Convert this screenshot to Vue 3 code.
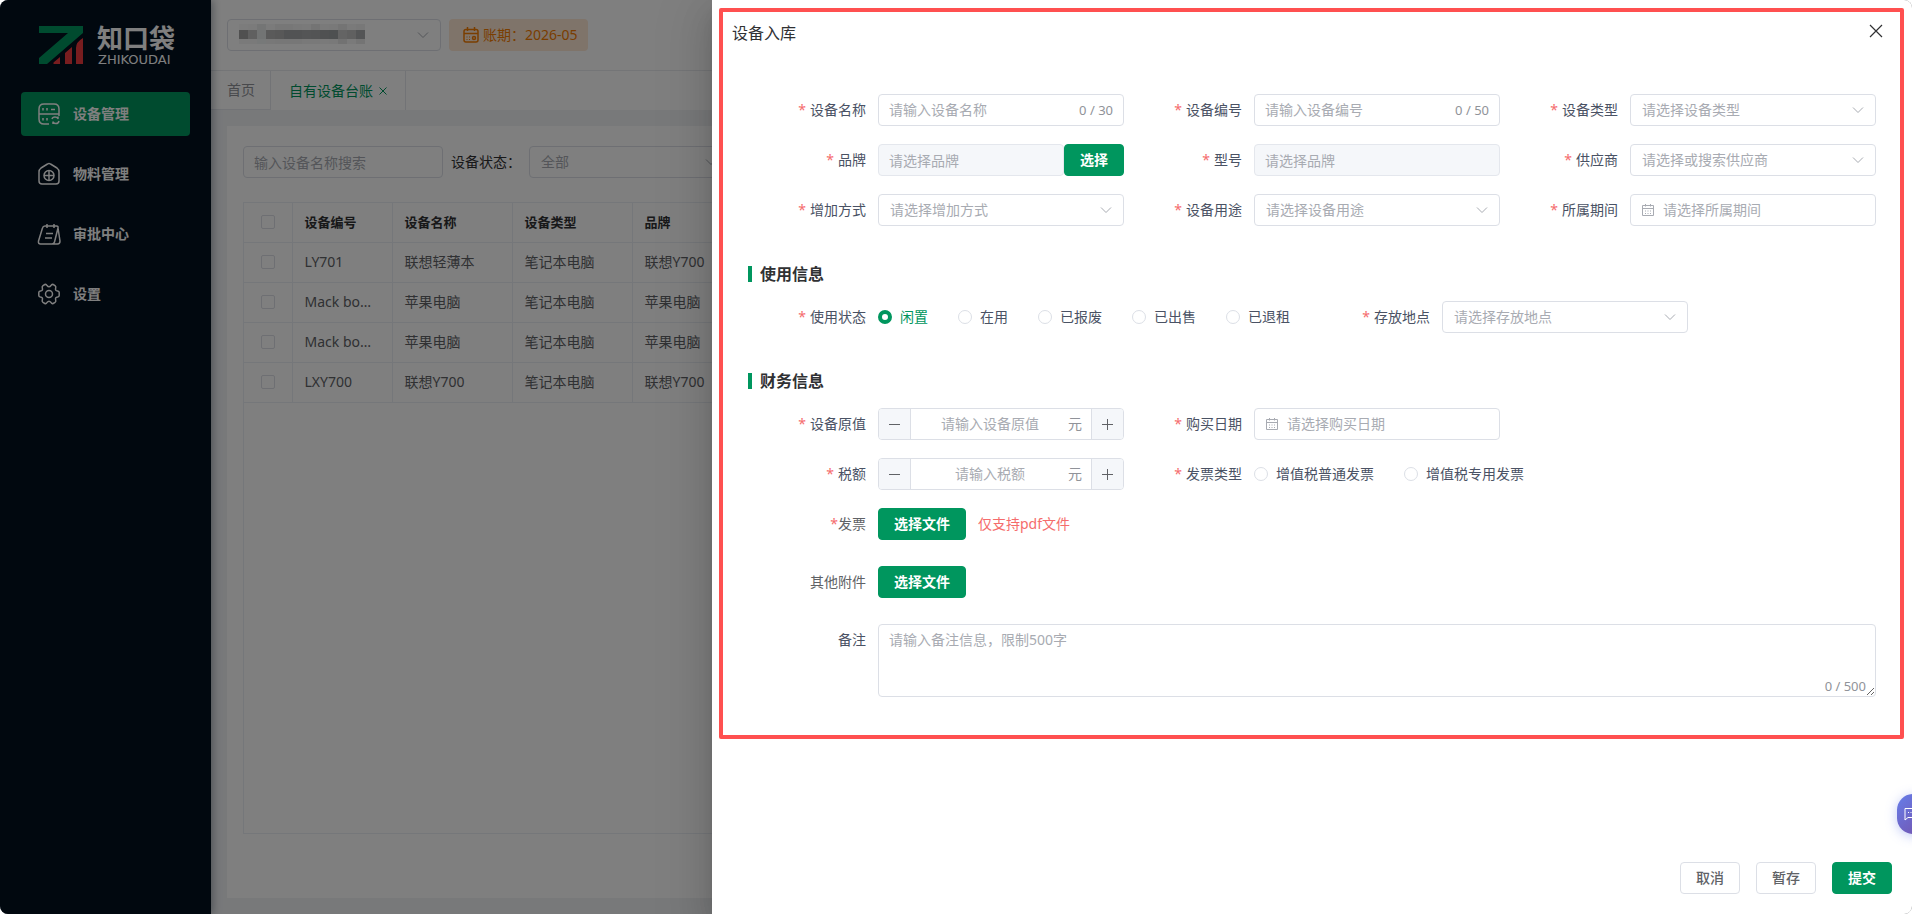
<script setup>
import { ref } from 'vue'

const menus = ['设备管理', '物料管理', '审批中心', '设置']
const activeMenu = ref(0)

// 台账列表
const rows = ref([
  { code: 'LY701', name: '联想轻薄本', type: '笔记本电脑', brand: '联想Y700' },
  { code: 'Mack book pro', name: '苹果电脑', type: '笔记本电脑', brand: '苹果电脑' },
  { code: 'Mack book air', name: '苹果电脑', type: '笔记本电脑', brand: '苹果电脑' },
  { code: 'LXY700', name: '联想Y700', type: '笔记本电脑', brand: '联想Y700' }
])

// 公司名称打码色块：上、中、下三行
const mosaic = [
  '#f8f8f8', '#f6f6f6', '#e8eaea', '#f6f6f6', '#eeeeee', '#eeeeee', '#f2f2f2', '#f4f4f4', '#e8e8e8', '#f4f4f4', '#f2f2f2', '#e8e8e8', '#f4f4f4', '#f0f0f0',
  '#a0a0a0', '#c0c0c0', '#e4e8e8', '#b4b4b4', '#b0b0b0', '#a4a6a8', '#a4a6a8', '#a8aaac', '#a6a8aa', '#a0a2a4', '#9ca0a2', '#c8c8c8', '#c0c0c0', '#a8aaac',
  '#f4f4f4', '#f4f4f4', '#eef2f2', '#f0f0f0', '#eeeeee', '#eeeeee', '#eeeeee', '#f2f2f2', '#f2f2f2', '#f4f4f4', '#f2f2f2', '#e4e4e4', '#f4f4f4', '#e8e8e8'
]

const statusList = ['闲置', '在用', '已报废', '已出售', '已退租']
const invoiceTypes = ['增值税普通发票', '增值税专用发票']

const form = ref({
  name: '', code: '', type: '', brand: '', model: '', supplier: '',
  addWay: '', usage: '', period: '', status: '闲置', place: '',
  price: '', buyDate: '', tax: '', invoiceType: '', remark: ''
})

const visible = ref(true)

const step = (key, n) => {
  form.value[key] = String(Math.max(0, Number(form.value[key] || 0) + n))
}
</script>

<template>
  <div class="app">
    <aside class="sidebar">
      <div class="logo">
        <svg width="44" height="38" viewBox="0 0 44 38">
          <path fill="#00965e" d="M0 0H44V7L8 38H0V32L29 7H0Z" />
          <path fill="#f03a3f" d="M21 31V38H14.500V36.500ZM33 21V38H26V27ZM44 12V38H37V22Q37 16 44 12Z" />
        </svg>
        <div class="logo-text">
          <span class="logo-cn">知口袋</span>
          <span class="logo-en">ZHIKOUDAI</span>
        </div>
      </div>
      <nav class="menu">
        <a v-for="(m, i) in menus" :key="m" href="#" class="menu-item" :class="{ active: activeMenu === i }" @click.prevent="activeMenu = i">
          <svg v-if="i === 0" class="menu-icon" viewBox="0 0 22 22">
            <path d="M1 11V6Q1 1 6 1H16Q21 1 21 6V11ZM1 11V16Q1 21 6 21H11M21 11V13" />
            <path d="M5 5V7.500M9 5V7.500M13 6.500H17M5 15V17.500M9 15V17.500M14 16Q14.500 14 17 14Q19 14 20 15.500V13.500M21 18Q20.500 20.500 18 20.500Q16 20.500 15 19V21" />
          </svg>
          <svg v-else-if="i === 1" class="menu-icon" viewBox="0 0 22 22">
            <path d="M9.500 1Q11 0 12.500 1L19 5Q21 6.500 21 9V18Q21 21 18 21H4Q1 21 1 18V9Q1 6.500 3 5Z" />
            <circle cx="11" cy="12.500" r="5" />
            <path d="M11 7.500V17.500M6 12.500H16" />
          </svg>
          <svg v-else-if="i === 2" class="menu-icon" viewBox="0 0 22 22">
            <path d="M18.500 3H7Q5 3 4.500 5L0.500 18Q0 21 2.500 21H14Q16 21 16.500 19L20 5Q20.500 3 18.500 3ZM20 5L22 18Q22 21 19.500 21H14M9 1V5M16 1V5M8 10.500H15M7 15H14" />
          </svg>
          <svg v-else class="menu-icon" viewBox="0 0 22 22">
            <path d="M6.800 1.500Q8.200 1 9 2.500Q11 5 13 2.500Q13.800 1 15.200 1.500L17 2.600Q18.200 3.500 17.700 5Q16.800 7.600 19.600 8Q21.200 8.300 21.200 9.600V12.400Q21.200 13.700 19.600 14Q16.800 14.400 17.700 17Q18.200 18.500 17 19.400L15.200 20.500Q13.800 21 13 19.500Q11 17 9 19.500Q8.200 21 6.800 20.500L5 19.400Q3.800 18.500 4.300 17Q5.200 14.400 2.400 14Q0.800 13.700 0.800 12.400V9.600Q0.800 8.300 2.400 8Q5.200 7.600 4.300 5Q3.800 3.500 5 2.600Z" />
            <circle cx="11" cy="11" r="3.500" />
          </svg>
          <span>{{ m }}</span>
        </a>
      </nav>
    </aside>

    <div class="main">
      <header class="topbar">
        <div class="select company">
          <select aria-label="公司"><option></option></select>
          <div class="mosaic"><i v-for="(c, i) in mosaic" :key="i" :style="{ background: c }"></i></div>
          <svg class="arrow" viewBox="0 0 14 14"><path d="M2 4.500L7 9.500L12 4.500" /></svg>
        </div>
        <div class="period">
          <svg width="16" height="16" viewBox="0 0 16 16">
            <path d="M3 2.500H13Q15 2.500 15 4.500V13Q15 15 13 15H3Q1 15 1 13V4.500Q1 2.500 3 2.500ZM1 6.500H15M4.500 0V4M11.500 0V4" stroke-width="1.5" />
            <path d="M3.500 10H4.500M6 10H7M3.500 12.500H4.500M6 12.500H7" />
            <circle cx="11" cy="11" r="1.500" stroke-width="1.5" />
          </svg>
          <span>账期：2026-05</span>
        </div>
      </header>
      <div class="tabs">
        <a href="#" class="tab">首页</a>
        <a href="#" class="tab current">自有设备台账
          <svg width="8" height="8" viewBox="0 0 8 8"><path d="M0.500 0.500L7.500 7.500M7.500 0.500L0.500 7.500" /></svg>
        </a>
      </div>
      <section class="content">
        <div class="filters">
          <input class="input search" type="text" placeholder="输入设备名称搜索" aria-label="设备名称">
          <label for="f-status">设备状态：</label>
          <div class="select filter-status">
            <select id="f-status"><option>全部</option></select>
            <svg class="arrow" viewBox="0 0 14 14"><path d="M2 4.500L7 9.500L12 4.500" /></svg>
          </div>
        </div>
        <div class="table-box">
          <table>
            <colgroup>
              <col class="c-check"><col class="c-code"><col class="c-mid"><col class="c-mid"><col class="c-mid"><col>
            </colgroup>
            <thead>
              <tr>
                <th class="check"><input type="checkbox" aria-label="全选"></th>
                <th>设备编号</th><th>设备名称</th><th>设备类型</th><th>品牌</th><th></th>
              </tr>
            </thead>
            <tbody>
              <tr v-for="r in rows" :key="r.code">
                <td class="check"><input type="checkbox" :aria-label="r.code"></td>
                <td>{{ r.code }}</td><td>{{ r.name }}</td><td>{{ r.type }}</td><td>{{ r.brand }}</td><td></td>
              </tr>
            </tbody>
          </table>
        </div>
      </section>
    </div>

    <div v-if="visible" class="overlay">
      <div class="drawer" role="dialog" aria-labelledby="drawer-title">
        <div class="frame">
          <div class="drawer-head">
            <span id="drawer-title">设备入库</span>
            <button class="close" aria-label="关闭" @click="visible = false">
              <svg width="14" height="14" viewBox="0 0 14 14"><path d="M1 1L13 13M13 1L1 13" stroke-width="1.2" /></svg>
            </button>
          </div>

          <form class="form" @submit.prevent>
            <div class="grid">
              <div class="item">
                <label class="label required" for="name">设备名称</label>
                <div class="input box">
                  <input id="name" v-model="form.name" maxlength="30" placeholder="请输入设备名称">
                  <span class="count">{{ form.name.length }} / 30</span>
                </div>
              </div>
              <div class="item">
                <label class="label required" for="code">设备编号</label>
                <div class="input box">
                  <input id="code" v-model="form.code" maxlength="50" placeholder="请输入设备编号">
                  <span class="count">{{ form.code.length }} / 50</span>
                </div>
              </div>
              <div class="item">
                <label class="label required" for="type">设备类型</label>
                <div class="select">
                  <select id="type" v-model="form.type"><option value="">请选择设备类型</option></select>
                  <svg class="arrow" viewBox="0 0 14 14"><path d="M2 4.500L7 9.500L12 4.500" /></svg>
                </div>
              </div>
              <div class="item">
                <label class="label required" for="brand">品牌</label>
                <input id="brand" v-model="form.brand" class="input" disabled placeholder="请选择品牌">
                <button type="button" class="btn primary">选择</button>
              </div>
              <div class="item">
                <label class="label required" for="model">型号</label>
                <input id="model" v-model="form.model" class="input" disabled placeholder="请选择品牌">
              </div>
              <div class="item">
                <label class="label required" for="supplier">供应商</label>
                <div class="select">
                  <select id="supplier" v-model="form.supplier"><option value="">请选择或搜索供应商</option></select>
                  <svg class="arrow" viewBox="0 0 14 14"><path d="M2 4.500L7 9.500L12 4.500" /></svg>
                </div>
              </div>
              <div class="item">
                <label class="label required" for="addWay">增加方式</label>
                <div class="select">
                  <select id="addWay" v-model="form.addWay"><option value="">请选择增加方式</option></select>
                  <svg class="arrow" viewBox="0 0 14 14"><path d="M2 4.500L7 9.500L12 4.500" /></svg>
                </div>
              </div>
              <div class="item">
                <label class="label required" for="usage">设备用途</label>
                <div class="select">
                  <select id="usage" v-model="form.usage"><option value="">请选择设备用途</option></select>
                  <svg class="arrow" viewBox="0 0 14 14"><path d="M2 4.500L7 9.500L12 4.500" /></svg>
                </div>
              </div>
              <div class="item">
                <label class="label required" for="period">所属期间</label>
                <div class="input box">
                  <svg class="date-icon" viewBox="0 0 14 14"><path d="M1.500 2.500H12.500V12.500H1.500ZM1.500 5.500H12.500M4.500 1V3.500M9.500 1V3.500M4 8H5M6.500 8H7.500M9 8H10M4 10.500H5M6.500 10.500H7.500M9 10.500H10" /></svg>
                  <input id="period" v-model="form.period" placeholder="请选择所属期间">
                </div>
              </div>
            </div>

            <h3 class="title">使用信息</h3>
            <div class="grid half">
              <div class="item">
                <span id="status-label" class="label required">使用状态</span>
                <div class="radios" role="radiogroup" aria-labelledby="status-label">
                  <label v-for="s in statusList" :key="s" class="radio" :class="{ on: form.status === s }">
                    <input v-model="form.status" type="radio" name="status" :value="s">{{ s }}
                  </label>
                </div>
              </div>
              <div class="item">
                <label class="label required" for="place">存放地点</label>
                <div class="select fixed">
                  <select id="place" v-model="form.place"><option value="">请选择存放地点</option></select>
                  <svg class="arrow" viewBox="0 0 14 14"><path d="M2 4.500L7 9.500L12 4.500" /></svg>
                </div>
              </div>
            </div>

            <h3 class="title">财务信息</h3>
            <div class="grid">
              <div class="item">
                <label class="label required" for="price">设备原值</label>
                <div class="input number">
                  <button type="button" aria-label="减少原值" @click="step('price', -1)"><svg width="12" height="12" viewBox="0 0 12 12"><path d="M0 6.500H11" /></svg></button>
                  <input id="price" v-model="form.price" inputmode="decimal" placeholder="请输入设备原值">
                  <span class="unit">元</span>
                  <button type="button" aria-label="增加原值" @click="step('price', 1)"><svg width="12" height="12" viewBox="0 0 12 12"><path d="M0 6.500H11M5.500 1V12" /></svg></button>
                </div>
              </div>
              <div class="item wide">
                <label class="label required" for="buyDate">购买日期</label>
                <div class="input box fixed">
                  <svg class="date-icon" viewBox="0 0 14 14"><path d="M1.500 2.500H12.500V12.500H1.500ZM1.500 5.500H12.500M4.500 1V3.500M9.500 1V3.500M4 8H5M6.500 8H7.500M9 8H10M4 10.500H5M6.500 10.500H7.500M9 10.500H10" /></svg>
                  <input id="buyDate" v-model="form.buyDate" placeholder="请选择购买日期">
                </div>
              </div>
              <div class="item">
                <label class="label required" for="tax">税额</label>
                <div class="input number">
                  <button type="button" aria-label="减少税额" @click="step('tax', -1)"><svg width="12" height="12" viewBox="0 0 12 12"><path d="M0 6.500H11" /></svg></button>
                  <input id="tax" v-model="form.tax" inputmode="decimal" placeholder="请输入税额">
                  <span class="unit">元</span>
                  <button type="button" aria-label="增加税额" @click="step('tax', 1)"><svg width="12" height="12" viewBox="0 0 12 12"><path d="M0 6.500H11M5.500 1V12" /></svg></button>
                </div>
              </div>
              <div class="item wide">
                <span id="invoice-label" class="label required">发票类型</span>
                <div class="radios" role="radiogroup" aria-labelledby="invoice-label">
                  <label v-for="t in invoiceTypes" :key="t" class="radio">
                    <input v-model="form.invoiceType" type="radio" name="invoice" :value="t">{{ t }}
                  </label>
                </div>
              </div>
            </div>

            <div class="files">
              <div class="item">
                <span class="label grey required tight">发票</span>
                <button type="button" class="btn primary">选择文件</button>
                <span class="hint">仅支持pdf文件</span>
              </div>
              <div class="item">
                <span class="label grey">其他附件</span>
                <button type="button" class="btn primary">选择文件</button>
              </div>
              <div class="item top">
                <label class="label" for="remark">备注</label>
                <div class="textarea">
                  <textarea id="remark" v-model="form.remark" maxlength="500" placeholder="请输入备注信息，限制500字"></textarea>
                  <span class="count">{{ form.remark.length }} / 500</span>
                </div>
              </div>
            </div>
          </form>
        </div>

        <footer class="drawer-foot">
          <button class="btn">取消</button>
          <button class="btn">暂存</button>
          <button class="btn primary">提交</button>
        </footer>
      </div>
    </div>

    <button class="float" aria-label="在线客服">
      <svg width="14" height="14" viewBox="0 0 14 14"><path d="M1 1.500H13V10.500H4L1 13Z" /><path d="M4 5.500H5M6.500 5.500H7.500M9 5.500H10" /></svg>
    </button>
  </div>
</template>

<style>
body { background: #fff; overflow: hidden; }
</style>

<style scoped>
* { box-sizing: border-box; }
.app { position: relative; display: flex; height: 100vh; overflow: hidden; border-radius: 8px; font-family: "Noto Sans", "Noto Sans CJK SC", sans-serif; font-size: 14px; line-height: 20px; color: #606266; }
button, input, select, textarea { font: inherit; color: inherit; margin: 0; }
a { text-decoration: none; color: inherit; }
svg { fill: none; stroke: currentColor; flex-shrink: 0; }

/* 表单控件 */
.input { flex: 1; min-width: 0; height: 32px; padding: 0 10px; border: 1px solid #dcdfe6; border-radius: 4px; background: #fff; outline: none; }
.input:disabled { border-color: #e4e7ed; background: #f5f7fa; }
.box { display: flex; align-items: center; gap: 8px; }
.box input, .number input { flex: 1; min-width: 0; width: 0; padding: 0; border: 0; outline: none; background: none; }
::placeholder { color: #a8abb2; opacity: 1; }
.count { font-size: 13px; color: #909399; }
.date-icon { width: 14px; height: 14px; color: #a8abb2; }
.select { position: relative; flex: 1; min-width: 0; }
.select select { appearance: none; display: block; width: 100%; height: 32px; padding: 0 30px 0 11px; border: 1px solid #dcdfe6; border-radius: 4px; background: #fff; color: #a8abb2; outline: none; }
.arrow { position: absolute; right: 11px; top: 9px; width: 14px; height: 14px; color: #a8abb2; pointer-events: none; }
.fixed { flex: 0 0 246px; }
.number { display: flex; align-items: center; padding: 0; overflow: hidden; }
.number button { display: flex; align-items: center; justify-content: center; width: 32px; height: 100%; padding: 0; border: 0; border-right: 1px solid #dcdfe6; background: #f5f7fa; color: #606266; }
.number button:last-child { border-right: 0; border-left: 1px solid #dcdfe6; }
.number input { margin-left: 9px; text-align: center; }
.unit { padding: 0 9px 0 8px; color: #909399; }
.btn { height: 32px; padding: 0 15px; border: 1px solid #dcdfe6; border-radius: 4px; background: #fff; font-weight: 500; white-space: nowrap; cursor: pointer; }
.btn.primary { border-color: #00965e; background: #00965e; color: #fff; font-weight: 700; }

/* 侧边栏 */
.sidebar { position: relative; z-index: 1; width: 211px; flex-shrink: 0; background: #02101e; box-shadow: 2px 0 8px rgba(0, 21, 41, 0.35); color: #fff; }
.logo { display: flex; gap: 14px; height: 92px; padding: 26px 0 0 39px; }
.logo svg { stroke: none; }
.logo-text { display: flex; flex-direction: column; }
.logo-cn { font-size: 26px; line-height: 24px; font-weight: 700; }
.logo-en { font-family: "DejaVu Sans", sans-serif; font-size: 13px; line-height: 20px; padding-left: 1px; }
.menu { display: flex; flex-direction: column; gap: 16px; padding: 0 21px; }
.menu-item { display: flex; align-items: center; gap: 13px; height: 44px; padding-left: 17px; border-radius: 4px; font-weight: 700; }
.menu-item.active { background: #00965e; }
.menu-icon { width: 22px; height: 22px; stroke-width: 1.5; overflow: visible; stroke-linejoin: round; }

/* 主区域 */
.main { flex: 1; min-width: 0; display: flex; flex-direction: column; background: #f0f2f5; }
.topbar { display: flex; align-items: center; gap: 8px; height: 71px; padding: 0 16px; border-bottom: 1px solid #e8eaee; background: #fff; }
.company { flex: 0 0 214px; }
.mosaic { position: absolute; left: 12px; top: 5px; display: grid; grid-template-columns: repeat(14, 9px); grid-template-rows: 6px 9px 5px; }
.period { display: flex; align-items: center; gap: 4px; height: 32px; padding: 0 10px 0 14px; border-radius: 4px; background: #ffe8d4; color: #f57c00; }
.tabs { display: flex; height: 39px; background: #fff; }
.tab { display: flex; align-items: center; gap: 6px; padding: 0 15px 0 16px; border-right: 1px solid #e4e7ed; border-bottom: 1px solid #e4e7ed; color: #909399; }
.tab.current { padding: 0 18px; border-bottom: 0; color: #00965e; }
.content { flex: 1; display: flex; flex-direction: column; margin: 16px; padding: 20px 16px 64px; background: #fff; }
.filters { display: flex; align-items: center; gap: 8px; margin-bottom: 24px; }
.filters label { color: #303133; }
.search, .filter-status { flex: 0 0 200px; }
.table-box { flex: 1; border: 1px solid #ebeef5; }
table { width: 100%; border-collapse: collapse; table-layout: fixed; }
.c-check { width: 48px; }
.c-code { width: 100px; }
.c-mid { width: 120px; }
th, td { height: 40px; padding: 0 12px; border-right: 1px solid #ebeef5; border-bottom: 1px solid #ebeef5; text-align: left; overflow: hidden; text-overflow: ellipsis; white-space: nowrap; }
th { height: 39px; font-size: 13px; color: #303133; }
.check { padding: 0; text-align: center; }
.check input { appearance: none; display: block; width: 14px; height: 14px; margin: 0 auto; border: 1px solid #dcdfe6; border-radius: 2px; background: #fff; }

/* 抽屉 */
.overlay { position: absolute; inset: 0; z-index: 2; display: flex; justify-content: flex-end; background: rgba(0, 0, 0, 0.5); }
.drawer { display: flex; flex-direction: column; justify-content: space-between; width: 1200px; max-width: 100%; padding: 8px 8px 20px 7px; background: #fff; box-shadow: 0 16px 48px 16px rgba(0, 0, 0, 0.08), 0 12px 32px rgba(0, 0, 0, 0.12), 0 8px 16px -8px rgba(0, 0, 0, 0.16); }
.frame { border: 4px solid #ff5050; border-radius: 2px; }
.drawer-head { display: flex; align-items: center; justify-content: space-between; height: 42px; padding: 0 17px 0 9px; font-size: 16px; color: #303133; }
.close { display: flex; padding: 0 5px 4px 0; margin-right: -5px; border: 0; background: none; color: #303133; cursor: pointer; }
.form { padding: 40px 24px 38px 25px; }
.grid { display: grid; grid-template-columns: repeat(3, minmax(0, 1fr)); row-gap: 18px; }
.half { grid-template-columns: repeat(2, minmax(0, 1fr)); }
.wide { grid-column: span 2; }
.item { display: flex; align-items: center; min-height: 32px; }
.item.top { align-items: flex-start; }
.label { flex: 0 0 130px; padding-right: 12px; line-height: 32px; text-align: right; color: #4a5264; }
.label.grey { color: #606266; }
.required::before { content: "*"; margin-right: 4px; color: #f56c6c; }
.tight::before { margin-right: 0; }
.title { display: flex; align-items: center; gap: 8px; height: 24px; margin: 36px 0 15px; font-size: 16px; line-height: 24px; color: #303133; }
.title::before { content: ""; width: 4px; height: 16px; background: #00965e; }

.radios { display: flex; gap: 30px; }
.radio { display: flex; align-items: center; gap: 8px; color: #4a5264; white-space: nowrap; }
.radio input { appearance: none; width: 14px; height: 14px; border: 1px solid #dcdfe6; border-radius: 50%; background: #fff; }
.radio input:checked { border: 4px solid #00965e; }
.radio.on { color: #00965e; }

.files { display: flex; flex-direction: column; gap: 26px; margin-top: 18px; }
.hint { margin-left: 12px; color: #f56c6c; }
.textarea { position: relative; flex: 1; }
.textarea textarea { display: block; width: 100%; height: 73px; padding: 5px 10px; border: 1px solid #dcdfe6; border-radius: 4px; outline: none; resize: vertical; }
.textarea .count { position: absolute; right: 10px; bottom: 2px; line-height: 18px; }

.drawer-foot { display: flex; justify-content: flex-end; gap: 16px; padding-right: 12px; }

/* 悬浮客服按钮 */
.float { position: absolute; z-index: 3; right: -25px; bottom: 80px; display: flex; align-items: center; width: 40px; height: 40px; padding: 0 0 0 7px; border: 0; border-radius: 16px; background: linear-gradient(135deg, #667eea, #764ba2); box-shadow: 0 2px 12px rgba(102, 126, 234, 0.4); color: #fff; }
</style>
